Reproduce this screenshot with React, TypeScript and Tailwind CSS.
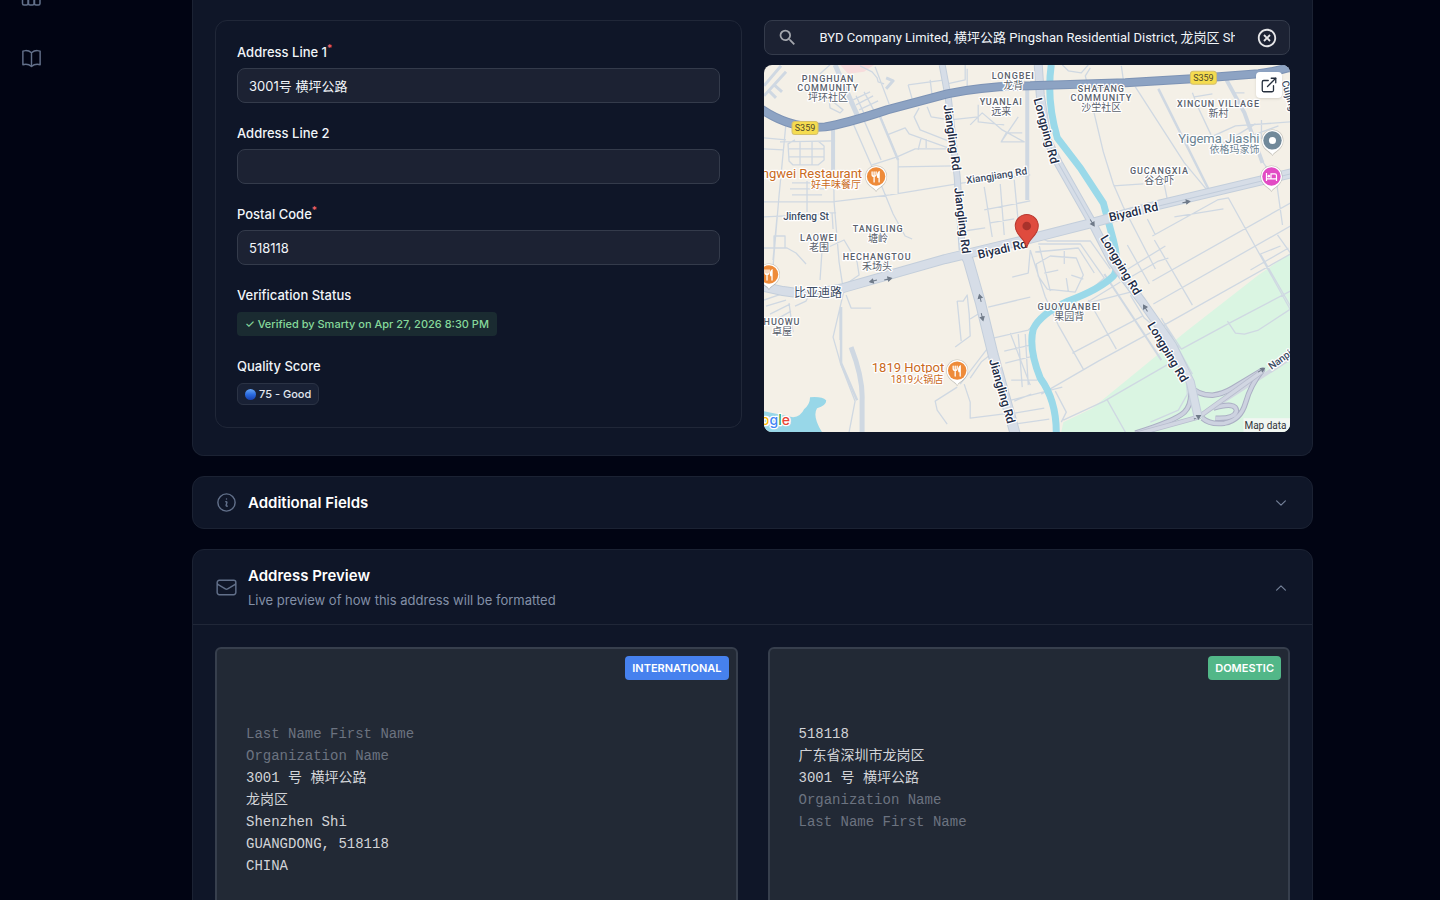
import { useState } from 'react';
import type { ReactNode } from 'react';
import { ExternalLink } from 'lucide-react';
import { MdHighlightOff, MdSearch } from 'react-icons/md';
import {
  HiOutlineBookOpen,
  HiOutlineChevronDown,
  HiOutlineChevronUp,
  HiOutlineEnvelope,
  HiOutlineInformationCircle,
} from 'react-icons/hi2';

const minorRoads = [
  'M764 138L786 140 M764 149L783 150 M786 123L779 196L771 290 M764 202L832 202L890 195L963 183L1030 175',
  'M833 127L834 202L839 262L843 288 M780 142L835 141 M795 140L788 144L789 161L793 165L818 165L824 160L824 146L818 141',
  'M789 149H824 M789 157H824 M800 142V165 M812 142V165 M792 183H824 M790 189H826 M792 195H822 M807 181V212',
  'M851 119L872 167L879 180L893 214L905 236L912 239 M862 116L881 160 M880 116L898 160L898 194',
  'M887 135L905 128L909 134L948 148 M872 165L897 157L915 149L948 149 M898 167L955 166 M919 108L914 117L920 130L948 141 M921 138L918 150 M926 139V148',
  'M875 67L889 104 M860 66L872 72L877 78L878 82L884 84 M853 100L870 92 M856 105L873 96 M859 110L878 101 M856 96L865 116 M864 92L874 111',
  'M830 65L820 74L829 82 M827 84L830 108L840 113L843 110L833 102 M908 85L945 80 M908 85L912 99 M930 80L932 96 M965 65V80L947 84 M967 69V89',
  'M927 107L931 117L950 120L978 117 M978 105V122L1004 125 M970 125L982 113L1002 130L1024 142H1001L1018 117 M1001 142L1006 133H1022',
  'M984 187L992 237 M984 210L1030 201 M990 223L1014 219 M1000 184L1004 235 M1014 180L1018 222L1030 226 M964 231L985 228',
  'M764 217L786 216L828 214 M777 217L773 260 M832 213L833 229 M829 213H836 M764 248H787L796 253L806 264 M774 252V236H785V248',
  'M820 280L822 250L844 240L857 262L859 275L843 286 M846 295L851 308L871 308 M844 290L833 337L841 365L855 401L849 432 M840 307V340',
  'M764 300L787 292 M766 306L786 300 M770 314L790 304 M775 320L791 311 M789 303L793 332 M795 306L806 301L810 293',
  'M957 301H963L967 295L969 314L970 336L955 347 M957 301L961 341 M970 319L978 314 M960 384L986 350L993 345 M964 384L970 402V418L1010 413 M957 387L935 401L937 410L947 424 M991 354L981 362L970 378',
  'M988 307L1030 297 M1012 277L1028 273L1030 250 M993 338L1028 330L1035 324 M1010 333L1030 385 M1004 351L1030 345 M1005 363L1033 356 M1011 380L1037 380 M1011 400L1062 387',
  'M1018 334L1022 387 M1025 334L1028 385 M1014 401L1031 394 M1014 413L1044 408 M1014 424L1049 419 M1055 391L1066 412L1061 422',
  'M1062 65L1068 71L1081 73L1088 65 M1090 68L1085 76L1103 152L1113 184L1123 207L1155 269 M1113 186L1143 184 M1121 66L1123 80',
  'M1135 87L1184 163L1209 193 M1158 89L1209 191 M1163 180L1168 205 M1192 93L1197 106L1212 138 M1194 97L1212 94 M1226 80L1244 113L1263 163L1276 182L1282 225',
  'M1213 136L1235 126L1290 122 M1222 144L1255 124 M1261 120V139 M1248 137L1278 126 M1232 93H1244 M1238 105H1247',
  'M1152 236L1217 200L1228 198L1290 310 M1147 219L1155 235 M1174 217L1223 209 M1152 281L1290 203 M1127 279L1158 261L1168 258 M1113 278L1165 246 M1153 304L1290 226',
  'M1036 236L1047 241H1090L1110 269 M1038 244H1080L1104 278L1090 290 M1035 252L1078 248L1094 273 M1036 264L1050 256L1076 258L1083 275L1075 292L1047 289L1038 276Z M1064 251V264 M1058 270L1044 273 M1071 275L1083 279 M1066 278L1068 291',
  'M1030 250L1045 297L1058 325L1083 369 M1039 246L1050 291 M1088 300L1116 349 M1127 245L1149 284 M1154 240L1192 305 M1130 295L1144 318L1181 349',
  'M1072 353L1142 316 M1041 394L1098 361L1153 331L1290 254 M1081 306L1120 282 M1052 312L1134 291 M1107 400L1125 432 M1063 420L1104 401L1168 364',
  'M1164 323L1181 349L1227 324L1290 291 M1227 321L1235 333L1244 334L1258 330L1290 309 M1280 246L1260 254L1290 306 M1161 318L1192 374',
  'M1185 371L1187 394L1178 410L1150 422 M1277 235L1290 253 M1250 270L1288 248',
];

const highway = 'M758 107Q790 130 825 127Q845 124 887 110L947 94Q985 86 1030 86L1125 83L1192 79L1258 74Q1275 72 1294 66';
const jianglingNorth = 'M942 65L948 97L957 177L962 250';
const jianglingSouth = 'M962 250L968 260L980 302L993 355L1015 434';
const longping = 'M1038 65L1040 95L1047 140L1058 163L1092 223L1112 262L1142 302L1172 345L1190 382L1198 418';
const biyadi = 'M760 286L783 291Q810 296 843 288L945 259L1025 240L1092 223L1158 205L1292 173';
const interchange =
  'M1190 385Q1196 395 1212 395Q1222 394 1232 388L1262 370Q1250 385 1245 403Q1240 420 1224 423Q1210 425 1202 418M1213 408Q1236 401 1236 411Q1234 419 1215 418M1190 388Q1192 404 1184 412Q1176 420 1135 433M1190 388L1198 417';

const districts = [
  { x: 828, y: 82, name: ['PINGHUAN', 'COMMUNITY'], local: '坪环社区' },
  { x: 1013, y: 79, name: ['LONGBEI'], local: '龙背' },
  { x: 1001, y: 105, name: ['YUANLAI'], local: '远来' },
  { x: 1101, y: 92, name: ['SHATANG', 'COMMUNITY'], local: '沙坣社区' },
  { x: 1218, y: 107, name: ['XINCUN VILLAGE'], local: '新村' },
  { x: 1159, y: 174, name: ['GUCANGXIA'], local: '谷仓吓' },
  { x: 878, y: 232, name: ['TANGLING'], local: '塘岭' },
  { x: 819, y: 241, name: ['LAOWEI'], local: '老围' },
  { x: 877, y: 260, name: ['HECHANGTOU'], local: '禾场头' },
  { x: 1069, y: 310, name: ['GUOYUANBEI'], local: '果园背' },
  { x: 782, y: 325, name: ['HUOWU'], local: '卓屋' },
];

const roadNames = [
  { x: 948, y: 138, angle: 82, text: 'Jiangling Rd' },
  { x: 958, y: 221, angle: 83, text: 'Jiangling Rd' },
  { x: 998, y: 392, angle: 74, text: 'Jiangling Rd' },
  { x: 1042, y: 132, angle: 75, text: 'Longping Rd' },
  { x: 1117, y: 267, angle: 59, text: 'Longping Rd' },
  { x: 1164, y: 354, angle: 59, text: 'Longping Rd' },
  { x: 1134, y: 216, angle: -13, text: 'Biyadi Rd' },
  { x: 1003, y: 253, angle: -13, text: 'Biyadi Rd' },
];

const arrows = [
  { x: 873, y: 281, angle: 166 },
  { x: 888, y: 279, angle: -14 },
  { x: 980, y: 298, angle: -104 },
  { x: 982, y: 317, angle: 76 },
  { x: 1186, y: 202, angle: -10 },
  { x: 1092, y: 223, angle: 58 },
  { x: 1145, y: 308, angle: -122 },
  { x: 1197, y: 417, angle: -30 },
  { x: 1261, y: 370, angle: -30 },
];

const international = [
  { text: 'Last Name First Name', muted: true },
  { text: 'Organization Name', muted: true },
  { text: '3001 号 横坪公路' },
  { text: '龙岗区' },
  { text: 'Shenzhen Shi' },
  { text: 'GUANGDONG, 518118' },
  { text: 'CHINA' },
];

const domestic = [
  { text: '518118' },
  { text: '广东省深圳市龙岗区' },
  { text: '3001 号 横坪公路' },
  { text: 'Organization Name', muted: true },
  { text: 'Last Name First Name', muted: true },
];

function Pin({ x, y, color, children }: { x: number; y: number; color: string; children?: ReactNode }) {
  return (
    <g transform={`translate(${x} ${y})`}>
      <path d="M0 15C-2 11-11 9-11-0.500A11 11 0 0 1 11-0.500C11 9 2 11 0 15Z" fill="#8b8b86" opacity="0.45" />
      <path d="M0 14C-2 10-10.500 8-10.500-0.500A10.500 10.500 0 0 1 10.500-0.500C10.500 8 2 10 0 14Z" fill="#fff" />
      <circle r="9.200" cy="-0.500" fill={color} />
      {children}
    </g>
  );
}

function ForkKnife() {
  return (
    <g stroke="#fff" fill="none" strokeWidth="1.300" strokeLinecap="round">
      <path d="M-4-5V-2.500A2 2 0 0 0 0-2.500V-5M-2-5V5" />
      <path d="M3 5V-5C1.300-4 1.300-1 1.800 0.500H3" fill="#fff" />
    </g>
  );
}

function RouteShield({ x, y }: { x: number; y: number }) {
  return (
    <g transform={`translate(${x} ${y})`}>
      <rect x="-13" y="-6.500" width="26" height="13" rx="3" fill="#f5dc4f" stroke="#d5c06b" />
      <text y="3" textAnchor="middle" className="fill-[#4f4a2c] text-[9px]">S359</text>
    </g>
  );
}

function AddressMap() {
  return (
    <svg
      viewBox="764 65 526 367"
      preserveAspectRatio="xMidYMid slice"
      role="img"
      aria-label="Map"
      className="block h-full w-full bg-[#f4f0e7] font-['Roboto','Noto_Sans_CJK_SC',sans-serif]"
    >
      <path d="M1290 253L1258 275L1185 332L1092 408L1063 422L1061 432H1290Z" fill="#daf5e2" />
      <path d="M840 65L848 74L864 72L874 65Z" fill="#f7dcdc" />
      <path
        d="M764 411L793 417Q801 416 804 409Q810 404 810 397Q822 396 826 400Q827 405 817 408Q812 416 822 432H764Z"
        fill="#98d7e8"
      />
      <g fill="none" stroke="#cfd8e2" strokeLinejoin="round">
        <path d={minorRoads.join(' ')} strokeWidth="1.300" />
        <path d="M835 65L857 115" strokeWidth="5" />
        <path d="M833 128V180" strokeWidth="4" />
        <path d="M764 86L781 66M764 96L786 72M773 84L782 92M768 90L776 98" strokeWidth="3" />
        <path d="M880 117L898 160M841 307V363L857 400" strokeWidth="2.500" />
        <path d="M851 347Q863 378 862 400V432" strokeWidth="5" />
        <path d="M886 78L893 81L886 89" strokeWidth="3" />
        <path d="M1027 90V200" strokeWidth="4" />
        <path d="M1226 80L1244 113L1262 163" strokeWidth="4" />
        <path d="M1158 89L1209 191" strokeWidth="2.500" />
        <path d="M1104 274L1161 360" strokeWidth="2" />
      </g>
      <path
        d="M1051 65Q1046 100 1057 138Q1070 155 1080 168L1103 203L1113 240Q1120 267 1113 276Q1100 289 1068 301Q1040 314 1033 329Q1028 348 1040 378Q1056 400 1056 432"
        fill="none"
        stroke="#9ad9e9"
        strokeWidth="7"
      />
      <g fill="none" strokeLinejoin="round">
        <path d="M1198 417L1290 358" stroke="#d1d7e1" strokeWidth="4" />
        <path d={interchange} stroke="#abafc4" strokeWidth="5.500" />
        <path d={interchange} stroke="#cdd2e0" strokeWidth="3.500" />
        <path d="M1125 437L1198 417L1262 371" stroke="#b8bdce" strokeWidth="5" />
        <path d="M1125 437L1198 417L1262 371" stroke="#d1d6e2" strokeWidth="3.500" />
      </g>
      <g fill="none" stroke="#c3cedb" strokeLinejoin="round">
        <path d={jianglingNorth} strokeWidth="7" />
        <path d={jianglingSouth} strokeWidth="11" />
        <path d={longping} strokeWidth="9" />
        <path d={biyadi} strokeWidth="10" />
      </g>
      <g fill="none" stroke="#d6dde7" strokeLinejoin="round">
        <path d={jianglingNorth} strokeWidth="5" />
        <path d={jianglingSouth} strokeWidth="9" />
        <path d={longping} strokeWidth="7" />
        <path d={biyadi} strokeWidth="8" />
      </g>
      <path d="M1047 140L1058 163L1092 223M1150 208L1290 174" fill="none" stroke="#c1ccda" />
      <path d={highway} fill="none" stroke="#7d93b5" strokeWidth="9" />
      <path d={highway} fill="none" stroke="#8da3c3" strokeWidth="7" />
      {arrows.map((arrow) => (
        <path
          key={`${arrow.x}-${arrow.y}`}
          transform={`translate(${arrow.x} ${arrow.y}) rotate(${arrow.angle})`}
          d="M-4 0H2M0-2L3.500 0L0 2Z"
          fill="#6f7a89"
          stroke="#6f7a89"
        />
      ))}

      <g stroke="#fff" strokeWidth="2.500" strokeLinejoin="round" className="[paint-order:stroke]">
        {districts.map((d) => (
          <g key={d.local} textAnchor="middle" className="fill-[#5a616c]">
            {d.name.map((line, i) => (
              <text key={line} x={d.x} y={d.y + i * 9} className="text-[9px] font-medium tracking-widest">{line}</text>
            ))}
            <text x={d.x} y={d.y + d.name.length * 9 + 1} className="text-[10px]">{d.local}</text>
          </g>
        ))}
        {roadNames.map((road) => (
          <text
            key={`${road.x}-${road.y}`}
            transform={`translate(${road.x} ${road.y}) rotate(${road.angle})`}
            textAnchor="middle"
            className="fill-[#1d2b45] text-[12px] font-medium"
          >
            {road.text}
          </text>
        ))}
        <text transform="translate(997 179) rotate(-9)" textAnchor="middle" className="fill-[#3d4c63] text-[10px] font-medium">
          Xiangjiang Rd
        </text>
        <text x="806" y="220" textAnchor="middle" className="fill-[#3d4c63] text-[10px] font-medium">Jinfeng St</text>
        <text x="818" y="297" textAnchor="middle" className="fill-[#3d4c63] text-[12px]">比亚迪路</text>
        <text transform="translate(1271 370) rotate(-36)" className="fill-[#3d4c63] text-[10px] font-medium">Nanpi</text>
        <text transform="translate(1281 82) rotate(74)" className="fill-[#3d4c63] text-[10px] font-medium">Cuijing</text>

        <g textAnchor="end" className="fill-[#ca6a22]">
          <text x="862" y="178" className="text-[13px]">ngwei Restaurant</text>
          <text x="861" y="188" className="text-[10px]">好丰味餐厅</text>
          <text x="944" y="372" className="text-[13px]">1819 Hotpot</text>
          <text x="943" y="383" className="text-[10px]">1819火锅店</text>
        </g>
        <g textAnchor="end" className="fill-[#6b8391]">
          <text x="1259" y="143" className="text-[13px]">Yigema Jiashi</text>
          <text x="1259" y="153" className="text-[10px]">依格玛家饰</text>
        </g>
        <text x="790" y="425" textAnchor="end" className="font-['Inter',sans-serif] text-[14px] font-medium">
          <tspan fill="#fbbc05">o</tspan>
          <tspan fill="#4285f4">g</tspan>
          <tspan fill="#34a853">l</tspan>
          <tspan fill="#ea4335">e</tspan>
        </text>
      </g>

      <RouteShield x={805} y={128} />
      <RouteShield x={1203} y={78} />
      <Pin x={876} y={177} color="#ee8b3a"><ForkKnife /></Pin>
      <Pin x={957} y={371} color="#ee8b3a"><ForkKnife /></Pin>
      <Pin x={769} y={275} color="#ee8b3a"><ForkKnife /></Pin>
      <Pin x={1272} y={141} color="#71899a"><circle r="3.500" cy="-0.500" fill="#fff" /></Pin>
      <Pin x={1271} y={177} color="#e24bc4">
        <path d="M-5-4V4M-5 2H5V4M5 2V-1.500A1.500 1.500 0 0 0 3.500-3H-0.500V2" fill="none" stroke="#fff" strokeWidth="1.200" />
        <circle cx="-2.700" cy="-0.800" r="1.300" fill="#fff" />
      </Pin>
      <path
        d="M1026.500 248C1025 238 1015 236 1015 226A11.500 11.500 0 0 1 1038 226C1038 236 1028 238 1026.500 248Z"
        fill="#df4b3e"
        stroke="#b93a31"
      />
      <circle cx="1026.500" cy="226" r="4.300" fill="#a8322b" />
      <rect x="1243" y="418" width="47" height="14" fill="#f5f7f5" opacity="0.85" />
      <text x="1286" y="429" textAnchor="end" className="fill-[#33363b] text-[10px]">Map data</text>
    </svg>
  );
}

function Field({ id, label, value, required }: { id: string; label: string; value: string; required?: boolean }) {
  return (
    <div>
      <label htmlFor={id} className="flex text-[13px] leading-5 font-medium text-slate-100">
        {label}
        {required && <span className="text-[10px] leading-3 text-red-400">*</span>}
      </label>
      <input
        id={id}
        type="text"
        defaultValue={value}
        className="mt-1.5 block h-[35px] w-full rounded-lg border border-[#343b4b] bg-[#1c2233] px-[11px] text-[13px] text-slate-100 outline-none focus:border-blue-500"
      />
    </div>
  );
}

function Preview({ tag, tagClass, lines }: { tag: string; tagClass: string; lines: { text: string; muted?: boolean }[] }) {
  return (
    <div className="flex min-h-[340px] flex-col rounded-md border-2 border-[#373f4d] bg-[#222935] p-[7px]">
      <span className={`flex h-6 items-center self-end rounded-sm px-[7px] text-[11px] font-semibold text-white ${tagClass}`}>
        {tag}
      </span>
      <address className="mt-[43px] pl-[22px] font-['Liberation_Mono','Noto_Sans_CJK_SC',monospace] text-[14px] leading-[22px] not-italic">
        {lines.map((line) => (
          <div key={line.text} className={line.muted ? 'text-[#6c7380]' : 'text-[#d2d4d8]'}>
            {line.text}
          </div>
        ))}
      </address>
    </div>
  );
}

export default function App() {
  const [place, setPlace] = useState('BYD Company Limited, 横坪公路 Pingshan Residential District, 龙岗区 Shenzhen Shi');

  return (
    <div className="flex h-screen overflow-hidden bg-[#010413] font-['Inter','Noto_Sans_CJK_SC',sans-serif] text-slate-100">
      <nav className="flex w-[65px] shrink-0 flex-col gap-10 pl-5 text-[#62708a]">
        <a href="#library" aria-label="Library" className="block h-[7px] overflow-hidden">
          <svg viewBox="0 0 24 7" className="h-[7px] w-6" fill="none" stroke="currentColor" strokeWidth="1.500">
            <path d="M2.500-4V3.500Q2.500 5 4 5H6.500Q8 5 8 3.500V-4M8.500-4V3.500Q8.500 5 10 5H12.500Q14 5 14 3.500V-4M14.500-4V3.500Q14.500 5 16 5H18.500Q20 5 20 3.500V-4" />
          </svg>
        </a>
        <a href="#docs" aria-label="Docs">
          <HiOutlineBookOpen className="h-[23px] w-[23px]" />
        </a>
      </nav>

      <main className="min-w-0 flex-1 px-4">
        <div className="mx-auto flex max-w-[1121px] flex-col gap-5">
          <section className="grid grid-cols-2 items-start gap-[22px] rounded-b-xl border border-t-0 border-[#1b2233] bg-[#0f1628] px-[22px] pt-5 pb-[23px]">
            <div className="flex flex-col gap-5 rounded-xl border border-[#202738] px-[21px] pt-[21px] pb-[22px]">
              <Field id="line1" label="Address Line 1" value="3001号 横坪公路" required />
              <Field id="line2" label="Address Line 2" value="" />
              <Field id="postal" label="Postal Code" value="518118" required />
              <div>
                <h3 className="text-[13px] leading-5 font-medium">Verification Status</h3>
                <span className="mt-[7px] flex h-6 w-fit items-center rounded-sm bg-[#1a2b31] px-2 text-[11px] font-medium text-[#86d99b]">
                  ✓ Verified by Smarty on Apr 27, 2026 8:30 PM
                </span>
              </div>
              <div>
                <h3 className="text-[13px] leading-5 font-medium">Quality Score</h3>
                <span className="mt-[7px] flex h-[22px] w-fit items-center gap-[3px] rounded-md border border-[#2b3345] bg-[#192135] px-[7px] text-[11px] font-medium text-slate-200">
                  <span className="h-[11px] w-[11px] rounded-full bg-linear-to-b from-[#68a5f5] via-[#2b6be0] to-[#173fae]" />
                  75 - Good
                </span>
              </div>
            </div>

            <div className="flex min-w-0 flex-col gap-2.5">
              <div className="flex h-[35px] items-center rounded-lg border border-[#343b4b] bg-[#1c2233] pr-[11px] pl-3">
                <label htmlFor="place" aria-label="Search for a place">
                  <MdSearch className="h-[21px] w-[21px] text-[#a3a6ad]" />
                </label>
                <input
                  id="place"
                  type="text"
                  value={place}
                  onChange={(e) => setPlace(e.target.value)}
                  className="mr-[21px] ml-[22px] min-w-0 flex-1 bg-transparent font-['Roboto','Noto_Sans_CJK_SC',sans-serif] text-[13px] text-slate-100 outline-none"
                />
                <button type="button" aria-label="Clear" onClick={() => setPlace('')}>
                  <MdHighlightOff className="h-[22px] w-[22px] text-[#e6e6e8]" />
                </button>
              </div>
              <div className="relative h-[367px] overflow-hidden rounded-lg">
                <AddressMap />
                <a
                  href="#map"
                  aria-label="Open map"
                  className="absolute top-[7px] right-2 flex h-[26px] w-[26px] items-center justify-center rounded-sm bg-white text-[#26303f] shadow"
                >
                  <ExternalLink className="h-[18px] w-[18px]" strokeWidth={1.75} />
                </a>
              </div>
            </div>
          </section>

          <section className="rounded-xl border border-[#1b2233] bg-[#0f1628]">
            <button type="button" className="flex w-full items-center gap-2.5 px-[22px] py-[14px] pr-6 text-left">
              <HiOutlineInformationCircle className="h-[23px] w-[23px] text-[#62708a]" />
              <span className="flex-1 text-[15px] leading-[22px] font-semibold text-white">Additional Fields</span>
              <HiOutlineChevronDown className="h-[14px] w-[14px] text-[#75829a]" strokeWidth={2} />
            </button>
          </section>

          <section className="rounded-t-xl border border-[#1b2233] bg-[#0f1628]">
            <button
              type="button"
              className="flex w-full items-center gap-2.5 border-b border-[#202738] px-[22px] pt-[15px] pr-6 pb-[14px] text-left"
            >
              <HiOutlineEnvelope className="h-[23px] w-[23px] text-[#62708a]" />
              <span className="flex flex-1 flex-col gap-[3px]">
                <span className="text-[15px] leading-[22px] font-semibold text-white">Address Preview</span>
                <span className="text-[13px] leading-5 text-[#8390a7]">Live preview of how this address will be formatted</span>
              </span>
              <HiOutlineChevronUp className="h-[14px] w-[14px] text-[#75829a]" strokeWidth={2} />
            </button>
            <div className="grid grid-cols-2 gap-[30px] p-[22px]">
              <Preview tag="INTERNATIONAL" tagClass="bg-[#4681ee]" lines={international} />
              <Preview tag="DOMESTIC" tagClass="bg-[#52b788]" lines={domestic} />
            </div>
          </section>
        </div>
      </main>
    </div>
  );
}
